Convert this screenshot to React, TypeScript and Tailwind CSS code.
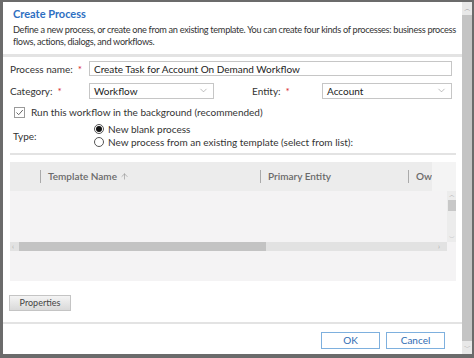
import { ChevronDown, ArrowUp } from "lucide-react"

const font = { fontFamily: 'Lato, "Noto Sans", sans-serif' }

const Req = () => <span className="text-[#d8272d] ml-[5px]">*</span>

const Select = ({ value, w }: { value: string; w: string }) => (
  <div className={`${w} h-[16px] border border-[#c6c6c6] bg-white flex items-center justify-between pl-[4px] pr-[4px] text-[10px] text-[#222]`}>
    <span>{value}</span>
    <ChevronDown size={11} strokeWidth={1.2} className="text-[#888]" />
  </div>
)

const App = () => {
  const cols = [
    { name: 'Template Name', w: 'w-[220px]', sort: true },
    { name: 'Primary Entity', w: 'w-[148px]', sort: false },
    { name: 'Own', w: 'w-[24px]', sort: false },
  ]

  return (
    <div className="w-[474px] h-[358px] bg-[#6b6b6b] pl-[3px] pt-[2px] pb-[4px] pr-[2px] flex overflow-hidden" style={font}>
      <div className="flex-1 bg-white flex flex-col">
        {/* header */}
        <div className="pl-[10px] pr-[6px] pt-[5px] pb-[6px] border-b-[3px] border-[#e3e3e3]">
          <h1 className="text-[11px] font-bold text-[#2e6fc2] leading-[14px]">Create Process</h1>
          <p className="text-[9.2px] text-[#333] leading-[12px] mt-[3px] tracking-[-0.3px]">
            Define a new process, or create one from an existing template. You can create four kinds of processes: business process flows, actions, dialogs, and workflows.
          </p>
        </div>

        {/* form */}
        <div className="px-[7px] pt-[3px] text-[10px] leading-[12px] text-[#333]">
          <div className="flex items-center h-[17px]">
            <span className="w-[79px]">Process name:<Req /></span>
            <div className="w-[363px] h-[15px] border border-[#c6c6c6] pl-[4px] flex items-center text-[#222]">Create Task for Account On Demand Workflow</div>
          </div>
          <div className="flex items-center h-[17px] mt-[5px]">
            <span className="w-[79px]">Category:<Req /></span>
            <Select value="Workflow" w="w-[125px]" />
            <span className="w-[108px] pl-[38px]">Entity:<Req /></span>
            <Select value="Account" w="w-[130px]" />
          </div>
          <div className="flex items-center gap-[6px] mt-[7px] pl-[4px]">
            <div className="w-[11px] h-[11px] border border-[#9a9a9a] flex items-center justify-center">
              <svg width="9" height="9" viewBox="0 0 9 9"><path d="M1.5 4.5 L3.7 6.7 L7.8 2" fill="none" stroke="#666" strokeWidth="1" /></svg>
            </div>
            <span>Run this workflow in the background (recommended)</span>
          </div>
          <div className="flex mt-[5px]">
            <span className="w-[84px] pl-[3px] pt-[7px]">Type:</span>
            <div className="flex flex-col gap-[1px]">
              <label className="flex items-center gap-[4px] h-[12px]">
                <span className="w-[10px] h-[10px] rounded-full border border-[#555] flex items-center justify-center">
                  <span className="w-[6px] h-[6px] rounded-full bg-[#111]" />
                </span>
                New blank process
              </label>
              <label className="flex items-center gap-[4px] h-[12px]">
                <span className="w-[10px] h-[10px] rounded-full border border-[#555]" />
                New process from an existing template (select from list):
              </label>
            </div>
          </div>
        </div>

        <div className="mx-[7px] mt-[5px] mr-[6px] border-b-[2px] border-[#e3e3e3]" />

        {/* grid */}
        <div className="mx-[7px] mr-[6px] mt-[7px] h-[119px] shrink-0 bg-[#f4f3f4] flex flex-col">
          <div className="h-[29px] shrink-0 bg-[#ececec] flex items-center text-[10px] text-[#6a6a6a] font-semibold">
            <div className="w-[30px]" />
            {cols.map((c, i) => (
              <div key={i} className={`${c.w} flex items-center shrink-0 overflow-hidden`}>
                <span className="w-[1px] h-[13px] bg-[#aaa] mr-[7px] shrink-0" />
                <span className="whitespace-nowrap">{c.name}</span>
                {c.sort && <ArrowUp size={9} strokeWidth={1.5} className="ml-[3px] text-[#888]" />}
              </div>
            ))}
            <div className="flex-1 h-full bg-[#f4f4f4]" />
          </div>
          <div className="flex h-[51px] shrink-0">
            <div className="flex-1" />
            <div className="w-[9px] bg-[#ececec] flex flex-col items-center">
              <span className="text-[6px] text-[#aaa] leading-[8px]">︿</span>
              <div className="w-[8px] h-[11px] bg-[#c8c8c8] mt-[1px]" />
              <div className="flex-1" />
              <span className="text-[6px] text-[#aaa] leading-[8px]">﹀</span>
            </div>
          </div>
          <div className="h-[9px] shrink-0 flex items-center bg-[#e2e2e2] mr-[9px]">
            <div className="w-[9px] text-[7px] text-[#aaa] leading-[9px] pl-[2px]">‹</div>
            <div className="w-[247px] h-[9px] bg-[#c3c3c3]" />
            <div className="flex-1" />
            <div className="w-[9px] text-[7px] text-[#aaa] leading-[9px]">›</div>
          </div>
        </div>

        <div className="px-[6px] mt-[14px]">
          <button className="w-[62px] h-[16px] border border-[#c4c4c4] bg-gradient-to-b from-[#f4f4f4] to-[#d9d9d9] text-[9px] text-[#444] block">Properties</button>
        </div>

        <div className="mt-[11px] border-t-[2px] border-[#e3e3e3] flex justify-end gap-[6px] pr-[17px] pt-[8px]">
          <button className="w-[59px] h-[17px] border border-[#7eb0de] bg-white text-[10px] text-[#2f6db3]">OK</button>
          <button className="w-[59px] h-[17px] border border-[#7eb0de] bg-white text-[10px] text-[#2f6db3]">Cancel</button>
        </div>
      </div>

      {/* window scrollbar */}
      <div className="w-[10px] bg-[#c4c4c4] flex flex-col">
        <div className="h-[13px] bg-[#e8e8e8] text-[7px] text-[#999] flex items-center justify-center">︿</div>
        <div className="flex-1" />
        <div className="h-[13px] bg-[#e8e8e8] text-[7px] text-[#999] flex items-center justify-center">﹀</div>
      </div>
    </div>
  )
}

export default App
